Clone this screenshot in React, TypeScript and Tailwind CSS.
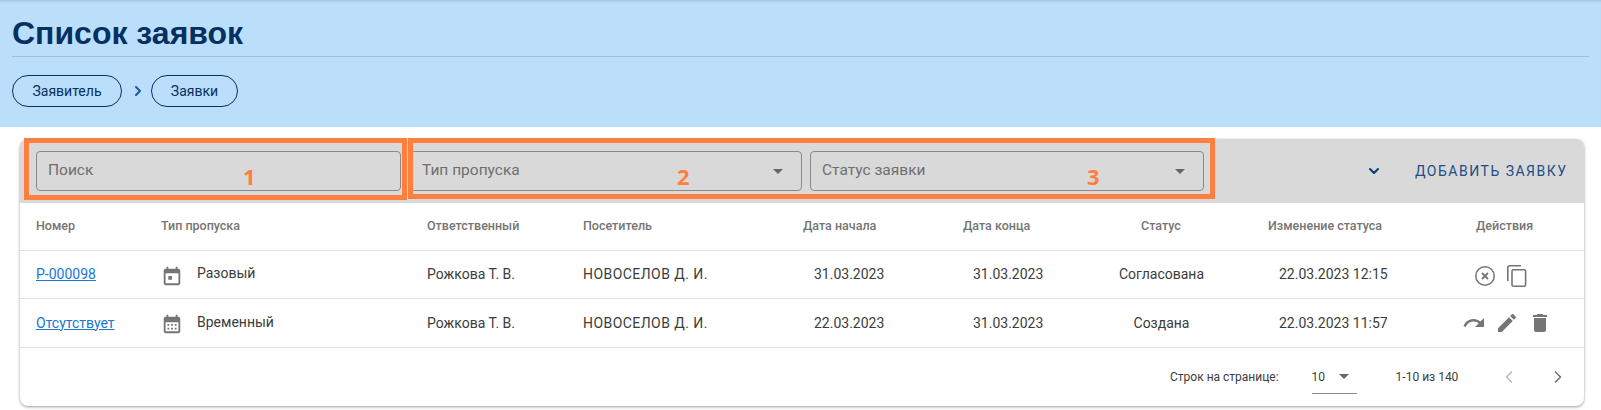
import React from "react";
import { ChevronDown, ChevronLeft, ChevronRight } from "lucide-react";

const gridCols = "grid grid-cols-[125px_266px_156px_220px_160px_178px_127px_208px_1fr]";

const headers = ["Номер", "Тип пропуска", "Ответственный", "Посетитель", "Дата начала", "Дата конца", "Статус", "Изменение статуса", "Действия"];

const Svg: React.FC<{ d: string; className?: string }> = ({ d, className }) => (
  <svg viewBox="0 0 24 24" className={className} fill="currentColor">
    <path d={d} />
  </svg>
);

const icons = {
  eventOnce: "M19 4h-1V2h-2v2H8V2H6v2H5c-1.11 0-2 .9-2 2v14c0 1.1.89 2 2 2h14c1.1 0 2-.9 2-2V6c0-1.1-.9-2-2-2zm0 16H5V9h14v11zM8 12h4v4H8z",
  eventMany: "M19 4h-1V2h-2v2H8V2H6v2H5c-1.1 0-2 .9-2 2v14c0 1.1.9 2 2 2h14c1.1 0 2-.9 2-2V6c0-1.1-.9-2-2-2zm0 16H5V10h14v10zM7 12h2v2H7zm4 0h2v2h-2zm4 0h2v2h-2zm-8 4h2v2H7zm4 0h2v2h-2zm4 0h2v2h-2z",
  redo: "M18.4 10.6C16.55 8.99 14.15 8 11.5 8c-4.65 0-8.58 3.03-9.96 7.22L3.9 16c1.05-3.19 4.05-5.5 7.6-5.5 1.95 0 3.73.72 5.12 1.88L13 16h9V7l-3.6 3.6z",
  edit: "M3 17.25V21h3.75L17.81 9.94l-3.75-3.75L3 17.25zM20.71 7.04c.39-.39.39-1.02 0-1.41l-2.34-2.34c-.39-.39-1.02-.39-1.41 0l-1.83 1.83 3.75 3.75 1.83-1.83z",
  trash: "M6 19c0 1.1.9 2 2 2h8c1.1 0 2-.9 2-2V7H6v12zM19 4h-3.5l-1-1h-5l-1 1H5v2h14V4z",
};

const CancelIcon = () => (
  <svg viewBox="0 0 24 24" className="w-6 h-6" fill="none" stroke="currentColor" strokeWidth={1.5}>
    <circle cx="12" cy="12" r="9.25" />
    <path d="M9 9l6 6M15 9l-6 6" strokeWidth={1.8} />
  </svg>
);

const CopyIcon = () => (
  <svg viewBox="0 0 24 24" className="w-6 h-6" fill="none" stroke="currentColor" strokeWidth={1.6}>
    <path d="M16 1.8H4.5c-1 0-1.7.7-1.7 1.7V17" />
    <rect x="7" y="5.8" width="13.6" height="16.4" rx="1.4" />
  </svg>
);

const Select: React.FC<{ label: string; width: string }> = ({ label, width }) => (
  <div className={`${width} h-10 shrink-0 rounded border border-[#8a8a8a] flex items-center justify-between pl-[11px] pr-[18px] text-[15.5px] text-[#6f6f6f]`}>
    <span>{label}</span>
    <span className="w-0 h-0 border-x-[5px] border-x-transparent border-t-[5px] border-t-[#666666]" />
  </div>
);

const Row: React.FC<{
  height: string;
  num: string;
  icon: string;
  type: string;
  start: string;
  status: string;
  changed: string;
  actions: React.ReactNode;
}> = ({ height, num, icon, type, start, status, changed, actions }) => (
  <div className={`${gridCols} ${height} pl-4 items-center text-[14px] text-[#3c3c3c] border-b border-[#e0e0e0]`}>
    <a className="text-[#1976d2] underline">{num}</a>
    <div className="flex items-center">
      <Svg d={icon} className="w-[22px] h-[22px] text-[#757575] mt-[2px]" />
      <span className="ml-[14px] -mt-[2px]">{type}</span>
    </div>
    <span>Рожкова Т. В.</span>
    <span className="tracking-[0.45px]">НОВОСЕЛОВ Д. И.</span>
    <span className="ml-[11px]">{start}</span>
    <span className="ml-[10px]">31.03.2023</span>
    <span className="-ml-[22px] w-[85px] text-center whitespace-nowrap">{status}</span>
    <span className="ml-[11px]">{changed}</span>
    {actions}
  </div>
);

export default function App() {
  return (
    <div className="relative w-[1601px] h-[410px] overflow-hidden bg-white font-['Roboto',sans-serif]">
      <header className="h-[127px] bg-[#bbdefb] px-3 pt-[13px] shadow-[inset_0_3px_3px_-2px_rgba(0,0,0,0.15)]">
        <h1 className="h-[44px] border-b border-[#9dbfdc] font-['Liberation_Sans',sans-serif] font-bold text-[32px] leading-[40px] text-[#05305f]">
          Список заявок
        </h1>
        <nav className="flex items-center mt-[18px] text-[14px] text-[#05305f]">
          <span className="w-[110px] h-8 rounded-full border border-[#05305f] flex items-center justify-center">Заявитель</span>
          <ChevronRight className="w-4 h-4 ml-[8px] mr-[5px] text-[#1c5a98]" strokeWidth={3} />
          <span className="w-[87px] h-8 rounded-full border border-[#05305f] flex items-center justify-center">Заявки</span>
        </nav>
      </header>

      <main className="mx-5 mt-3 w-[1564px] h-[267px] rounded-lg bg-white shadow-[0_1px_3px_rgba(0,0,0,0.4)]">
        <div className="h-[64px] rounded-t-lg bg-[#d9d9d9] flex items-center pl-4">
          <div className="w-[365px] h-10 shrink-0 rounded border border-[#8a8a8a] flex items-center pl-[11px] text-[15.5px] text-[#6f6f6f]">Поиск</div>
          <div className="w-[9px] shrink-0" />
          <Select label="Тип пропуска" width="w-[392px]" />
          <div className="w-2 shrink-0" />
          <Select label="Статус заявки" width="w-[394px]" />
          <ChevronDown className="w-4 h-4 ml-[162px] text-[#05407a]" strokeWidth={3} />
          <span className="ml-[33px] text-[14px] tracking-[1.5px] text-[#1c4f85]">ДОБАВИТЬ ЗАЯВКУ</span>
        </div>

        <div className={`${gridCols} h-[48px] pl-4 items-center text-[12.5px] font-medium text-[#757575] border-b border-[#e0e0e0]`}>
          {headers.map((h) => (
            <span key={h}>{h}</span>
          ))}
        </div>

        <Row
          height="h-[48px]"
          num="Р-000098"
          icon={icons.eventOnce}
          type="Разовый"
          start="31.03.2023"
          status="Согласована"
          changed="22.03.2023 12:15"
          actions={
            <div className="flex items-center gap-2 text-[#757575] ml-[-3px] mt-[2px]">
              <CancelIcon />
              <CopyIcon />
            </div>
          }
        />
        <Row
          height="h-[49px]"
          num="Отсутствует"
          icon={icons.eventMany}
          type="Временный"
          start="22.03.2023"
          status="Создана"
          changed="22.03.2023 11:57"
          actions={
            <div className="flex items-center gap-[9px] text-[#757575] ml-[-14px]">
              <Svg d={icons.redo} className="w-6 h-6" />
              <Svg d={icons.edit} className="w-6 h-6" />
              <Svg d={icons.trash} className="w-6 h-6" />
            </div>
          }
        />

        <div className="h-[58px] flex items-center text-[12px] text-[#3c3c3c]">
          <span className="ml-[1150px]">Строк на странице:</span>
          <div className="ml-[33px] w-[45px] h-[34px] border-b border-[#8a8a8a] flex items-center">
            <span>10</span>
            <span className="ml-[14px] w-0 h-0 border-x-[5px] border-x-transparent border-t-[5px] border-t-[#666666]" />
          </div>
          <span className="ml-[39px]">1-10 из 140</span>
          <ChevronLeft className="w-5 h-5 ml-[41px] text-[#bdbdbd]" strokeWidth={2} />
          <ChevronRight className="w-5 h-5 ml-[29px] text-[#757575]" strokeWidth={2} />
        </div>
      </main>

      {/* orange callouts drawn on the screenshot */}
      <div className="absolute left-[24px] top-[138px] w-[383px] h-[62px] border-[5px] border-[#ff7f3f]" />
      <div className="absolute left-[408px] top-[138px] w-[807px] h-[61px] border-[5px] border-[#ff7f3f]" />
      <span className="absolute left-[243px] top-[163px] font-['Open_Sans',sans-serif] font-bold text-[22px] leading-[26px] text-[#ff7f3f]">1</span>
      <span className="absolute left-[677px] top-[163px] font-['Open_Sans',sans-serif] font-bold text-[22px] leading-[26px] text-[#ff7f3f]">2</span>
      <span className="absolute left-[1087px] top-[163px] font-['Open_Sans',sans-serif] font-bold text-[22px] leading-[26px] text-[#ff7f3f]">3</span>
    </div>
  );
}
